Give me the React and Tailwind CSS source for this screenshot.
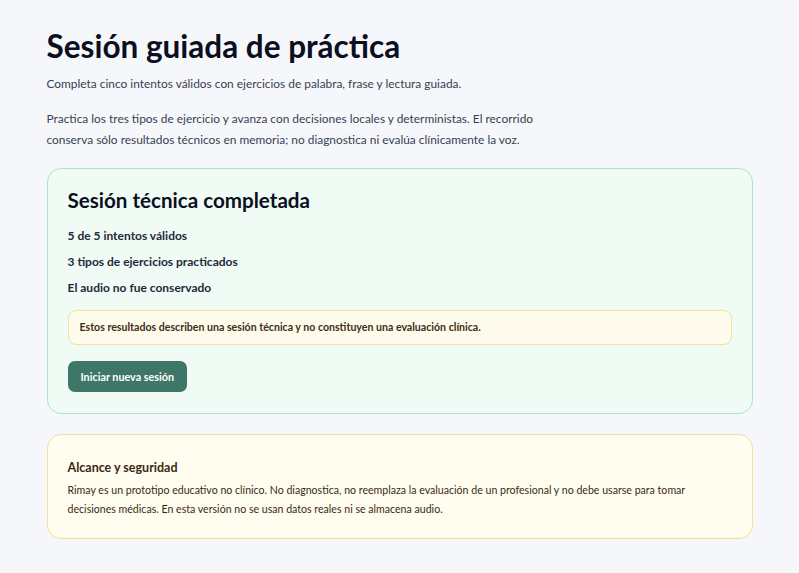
export default function App() {
  return (
    <div className="min-h-screen bg-[#f6f7fb] font-['Lato',sans-serif] text-[#111827]">
      <main className="mx-auto w-[706px] pt-[26px] pb-10">
        {/* Header */}
        <h1 className="text-[31.5px] font-bold leading-[40px] text-[#0b0f1e]">
          Sesión guiada de práctica
        </h1>
        <p className="mt-[8px] text-[11.9px] leading-[20px] text-[#374151]">
          Completa cinco intentos válidos con ejercicios de palabra, frase y lectura guiada.
        </p>
        <p className="mt-[14px] max-w-[495px] text-[11.9px] leading-[21px] text-[#374151]">
          Practica los tres tipos de ejercicio y avanza con decisiones locales y deterministas. El recorrido
          conserva sólo resultados técnicos en memoria; no diagnostica ni evalúa clínicamente la voz.
        </p>

        {/* Result card */}
        <section className="mt-[18px] rounded-[14px] border border-[#a9e5c9] bg-[#f0fbf6] px-[20px] pt-[17px] pb-[21px]">
          <h2 className="text-[20.6px] font-bold leading-[28px] text-[#0b0f1e]">
            Sesión técnica completada
          </h2>
          <div className="mt-[12px] flex flex-col gap-[6px] text-[12px] font-bold leading-[20px] text-[#1f2937]">
            <p>5 de 5 intentos válidos</p>
            <p>3 tipos de ejercicios practicados</p>
            <p>El audio no fue conservado</p>
          </div>
          <div className="mt-[12px] rounded-[8px] border border-[#f3e2a2] bg-[#fffbec] px-[11px] py-[8px] text-[10.6px] font-bold leading-[17px] text-[#3b2f14]">
            Estos resultados describen una sesión técnica y no constituyen una evaluación clínica.
          </div>
          <button className="mt-[16px] rounded-[7px] bg-[#3e7768] px-[13px] py-[7.5px] text-[10.8px] font-bold leading-[16px] text-white">
            Iniciar nueva sesión
          </button>
        </section>

        {/* Scope notice */}
        <section className="mt-[20px] rounded-[14px] border border-[#f2df9c] bg-[#fffdf0] pl-[20px] pr-[40px] pt-[24px] pb-[19px] text-[#3a2a12]">
          <h3 className="text-[12.5px] font-bold leading-[18px]">Alcance y seguridad</h3>
          <p className="mt-[4px] text-[10.6px] leading-[19px]">
            Rimay es un prototipo educativo no clínico. No diagnostica, no reemplaza la evaluación de un profesional y no debe usarse para tomar
            decisiones médicas. En esta versión no se usan datos reales ni se almacena audio.
          </p>
        </section>
      </main>
    </div>
  );
}
